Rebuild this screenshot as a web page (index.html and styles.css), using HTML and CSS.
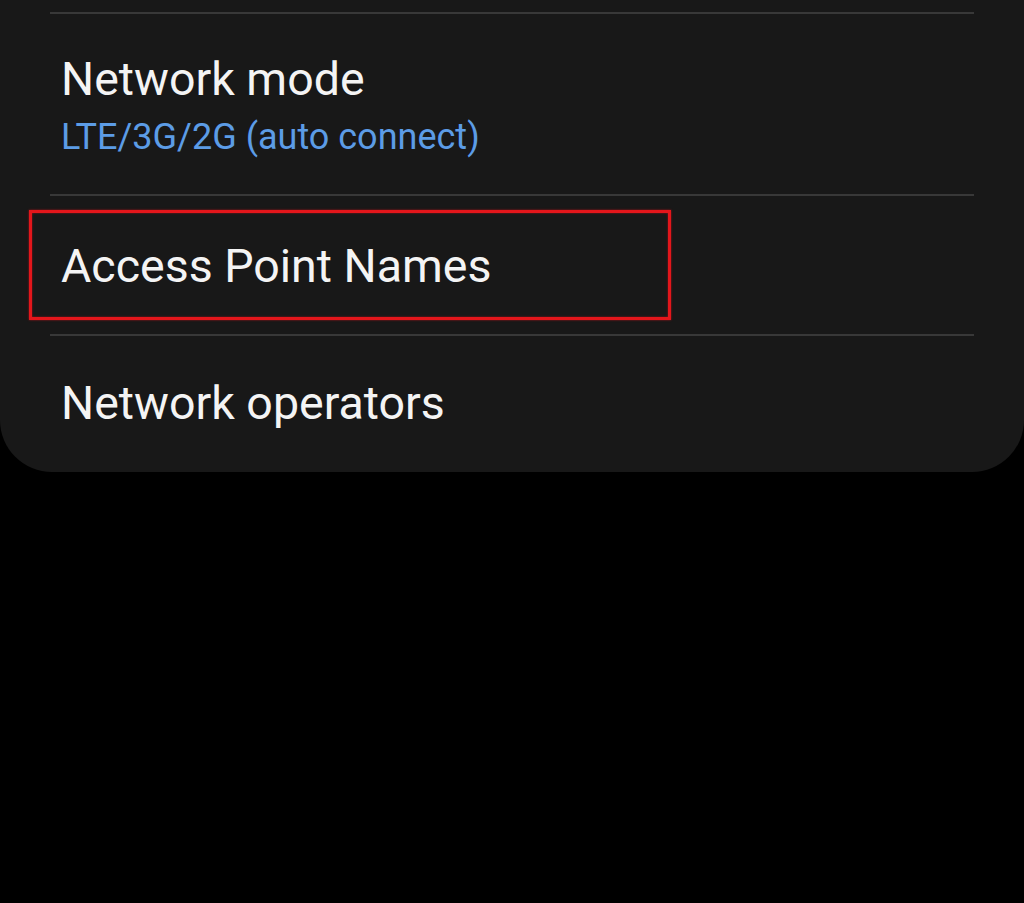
FILE: index.html
```html
<!DOCTYPE html>
<html lang="en">
<head>
    <meta charset="UTF-8">
    <meta name="viewport" content="width=device-width, initial-scale=1.0">
    <title>Mobile networks</title>
    <link rel="stylesheet" href="styles.css">
</head>
<body>
    <section class="card">
        <div class="item item-mode">
            <span class="title">Network mode</span>
            <span class="summary">LTE/3G/2G (auto connect)</span>
        </div>
        <div class="item item-apn">
            <span class="title">Access Point Names</span>
            <div class="highlight"></div>
        </div>
        <div class="item item-operators">
            <span class="title">Network operators</span>
        </div>
    </section>
</body>
</html>
```

FILE: styles.css
```css
* {
    margin: 0;
    padding: 0;
    box-sizing: border-box;
}
body {
    background-color: #000;
    width: 1024px;
    height: 903px;
    overflow: hidden;
    font-family: Roboto, "Noto Sans", sans-serif;
}
.card {
    background-color: #181818;
    border-radius: 0 0 52px 52px;
    padding: 12px 50px 0;
    height: 472px;
}
.item {
    position: relative;
    display: flex;
    flex-direction: column;
    border-top: 2px solid #383838;
}
.title {
    color: #f4f4f4;
    font-size: 46.5px;
    line-height: 54px;
    padding-left: 11px;
}
.summary {
    color: #5c9ce6;
    font-size: 36px;
    line-height: 42px;
    padding-left: 11px;
    margin-top: 10px;
}
.item-mode {
    height: 182px;
    padding-top: 38px;
}
.item-apn {
    height: 140px;
    padding-top: 43px;
}
.item-operators {
    padding-top: 40px;
}
.highlight {
    position: absolute;
    left: -21px;
    top: 14px;
    width: 642px;
    height: 110px;
    border: 3px solid #e3161b;
    box-shadow: 0 0 2px rgba(227, 22, 27, 0.7), inset 0 0 2px rgba(227, 22, 27, 0.7);
}
```
